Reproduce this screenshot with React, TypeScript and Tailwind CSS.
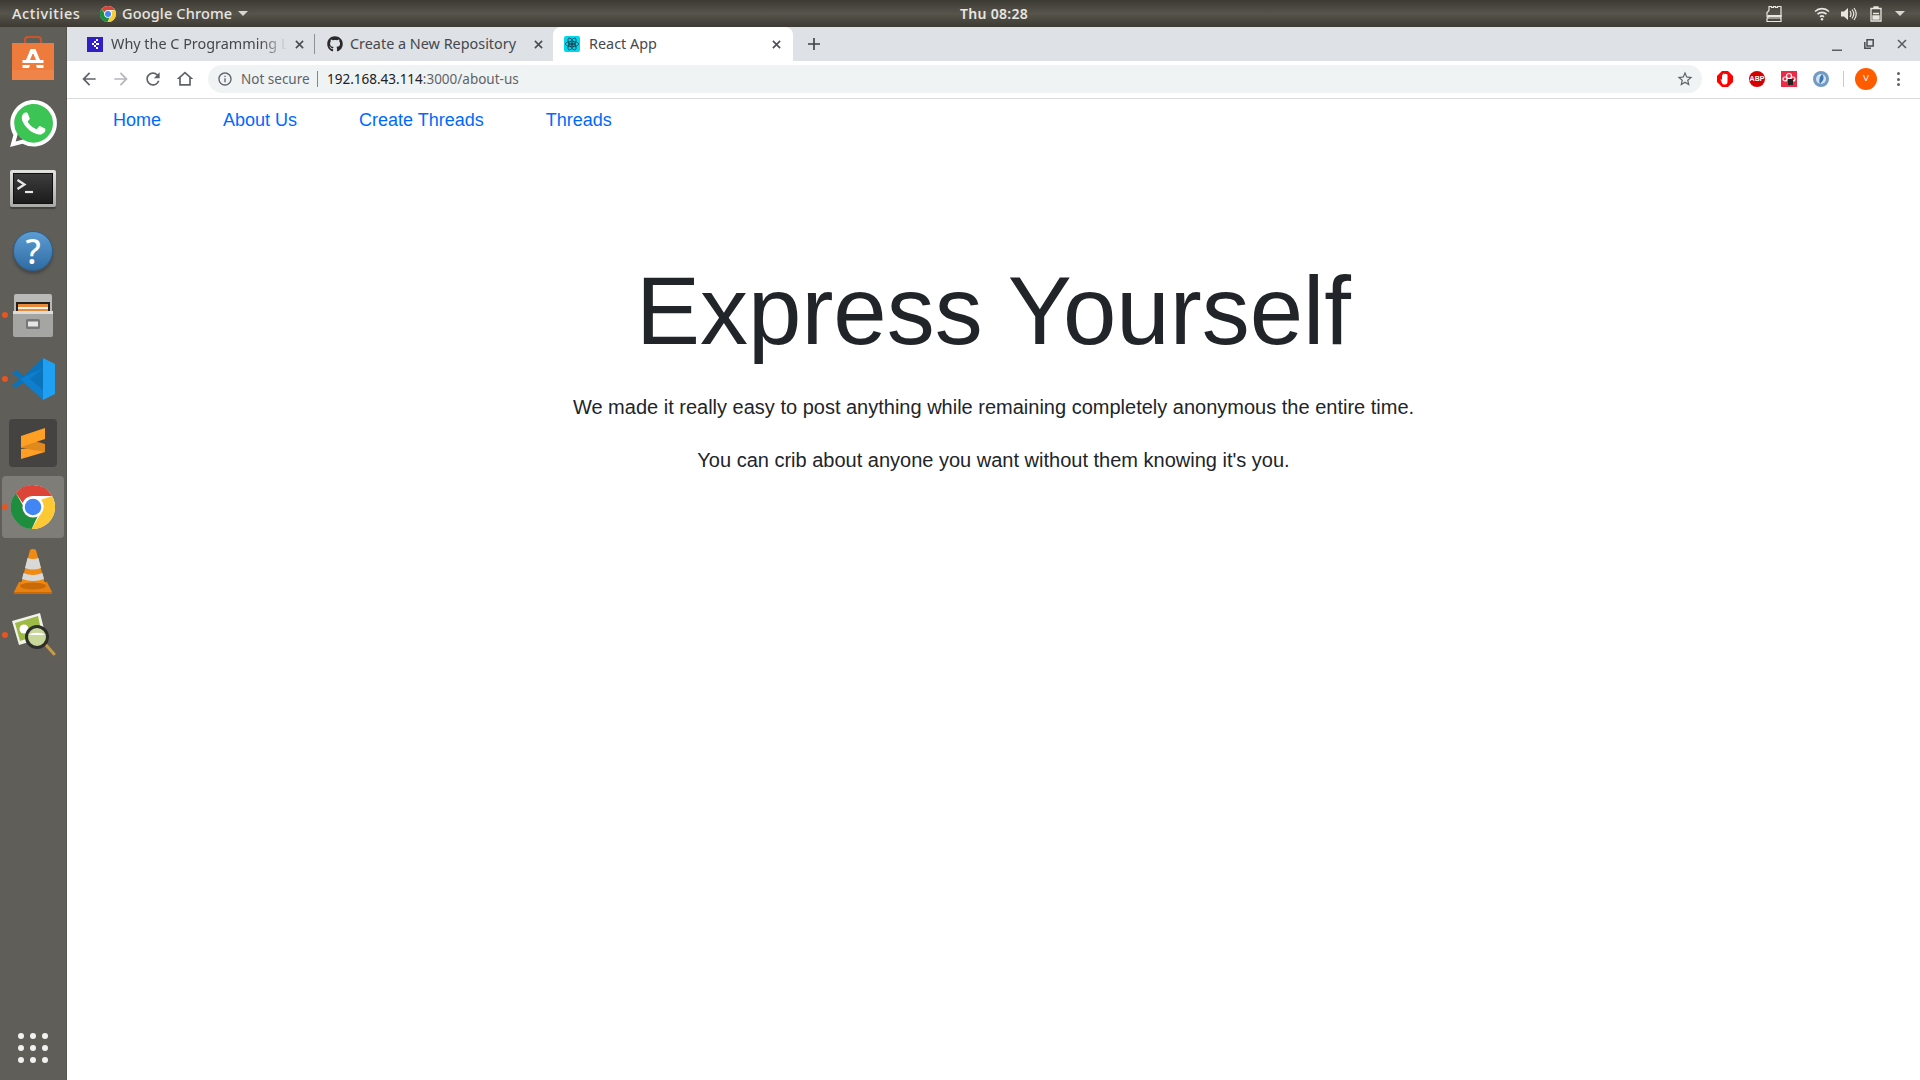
import React from "react";
import { FaGithub } from "react-icons/fa";
import { SiWhatsapp } from "react-icons/si";

const ui = { fontFamily: '"Noto Sans", "Open Sans", sans-serif' };
const arial = { fontFamily: '"Liberation Sans", Arial, sans-serif' };

function ChromeLogo({ size }: { size: number }) {
  return (
    <svg width={size} height={size} viewBox="0 0 48 48">
      <circle cx="24" cy="24" r="24" fill="#fff" />
      <path d="M24 0a24 24 0 0 1 20.8 12H24a12 12 0 0 0-11.2 7.6L5.2 8.6A24 24 0 0 1 24 0z" fill="#db4437" />
      <path d="M44.8 12A24 24 0 0 1 22.5 48l10.9-18.6A12 12 0 0 0 33 16z" fill="#fcc934" />
      <path d="M22.5 48A24 24 0 0 1 5.2 8.6l10.6 18.5A10 10 0 0 0 29.6 33z" fill="#1e8e3e" />
      <circle cx="24" cy="24" r="11.5" fill="#fff" />
      <circle cx="24" cy="24" r="9" fill="#4285f4" />
    </svg>
  );
}

function Material({ d, size = 20, color = "#5f6368", className = "" }: { d: string; size?: number; color?: string; className?: string }) {
  return (
    <svg width={size} height={size} viewBox="0 0 24 24" fill={color} fillRule="evenodd" className={className}>
      <path d={d} />
    </svg>
  );
}

function CloseX({ color = "#4a4d51", size = 9, sw = 1.6 }: { color?: string; size?: number; sw?: number }) {
  return (
    <svg width={size} height={size} viewBox="0 0 10 10" stroke={color} strokeWidth={sw * (10 / size)} fill="none">
      <path d="M1 1l8 8M9 1l-8 8" />
    </svg>
  );
}

function Slot({ dot, active, children }: { dot?: boolean; active?: boolean; children: React.ReactNode }) {
  return (
    <div className="relative h-[64px] w-[66px] flex items-center justify-center shrink-0">
      {active && <div className="absolute left-[2px] top-[1px] h-[62px] w-[62px] rounded-[4px] bg-[#7f7d78]" />}
      {dot && <div className="absolute left-[2px] top-[29px] h-[6px] w-[6px] rounded-full bg-[#e95420]" />}
      <div className="relative flex items-center justify-center">{children}</div>
    </div>
  );
}

function Dock() {
  return (
    <aside className="w-[67px] shrink-0 bg-[#5f5e59] border-r border-[#55544f] flex flex-col">
      <Slot>
        <svg width="44" height="46" viewBox="0 0 44 46">
          <path d="M14 10V4q0-3 3-3h10q3 0 3 3v6" fill="none" stroke="#c9562a" strokeWidth="2.2" />
          <path d="M1 7h42v37H1z" fill="#ee7a3c" />
          <path d="M1 34h42v10H1z" fill="#f08348" />
          <path d="M19.500 13h5l4.500 11h3.500v3H29v2h3.500v3H26l-1-3h-6l-1 3h-6.500v-3H15v-2h-3.500v-3H15z" fill="#fff" />
          <path d="M19 24l2.500-6h1l2.500 6z" fill="#ee7a3c" />
          <path d="M15 27h14v2H15z" fill="#ee7a3c" />
        </svg>
      </Slot>
      <Slot>
        <div className="relative w-[47px] h-[47px]">
          <div className="absolute left-[4px] top-[3px] h-[40px] w-[40px] rounded-full bg-[#3cc455]" />
          <SiWhatsapp className="absolute inset-0 text-white" size={47} />
        </div>
      </Slot>
      <Slot>
        <div className="h-[37px] w-[46px] bg-gradient-to-b from-[#e2e2e0] to-[#a9a9a7] rounded-[2px] p-[3px] mt-[2px] shadow-[0_2px_1px_rgba(0,0,0,0.3)]">
          <div className="h-full w-full bg-gradient-to-b from-[#3d3d3d] to-[#1c1c1c] border border-[#111] relative">
            <svg width="38" height="29" viewBox="0 0 38 29" fill="none" stroke="#e8e8e8" strokeWidth="2.200">
              <path d="M3.500 6l7 4.500-7 4.500" />
              <path d="M11 18h8" />
            </svg>
          </div>
        </div>
      </Slot>
      <Slot>
        <div className="h-[40px] w-[40px] rounded-full bg-gradient-to-b from-[#5d9dd3] to-[#2f6ca3] border border-[#2a5f90] flex items-center justify-center shadow-[0_3px_3px_rgba(0,0,0,0.25)]">
          <span className="text-white text-[34px] font-medium leading-none" style={ui}>?</span>
        </div>
      </Slot>
      <Slot dot>
        <svg width="42" height="44" viewBox="0 0 42 44">
          <path d="M2 3q0-2 2-2h34q2 0 2 2v36H2z" fill="#b9b9b7" />
          <path d="M4 9h34v13H4z" fill="#22201e" />
          <path d="M6 11h30v11H6z" fill="#e68a3a" />
          <path d="M6 14h30v2H6z" fill="#f6f0e6" />
          <path d="M1 18h40v24q0 2-2 2H3q-2 0-2-2z" fill="#a5a5a3" />
          <path d="M1 18h40v3H1z" fill="#dcdcda" />
          <rect x="14" y="26" width="14" height="10" rx="1.500" fill="#77777a" />
          <rect x="16" y="28.500" width="10" height="5" fill="#e6e6e4" />
        </svg>
      </Slot>
      <Slot dot>
        <svg width="43" height="44" viewBox="0 0 43 44">
          <path d="M31 1L12 19 4 13 0 16l8 6-8 6 4 3 8-6 19 18 2-6V7z" fill="#0b73ba" />
          <path d="M31 11L18 22l13 11v10L8 22z" fill="#0e7fce" />
          <path d="M31 1l12 6v30l-12 6z" fill="#20a0f3" />
        </svg>
      </Slot>
      <Slot>
        <div className="h-[48px] w-[48px] rounded-[4px] bg-[#444341] flex items-center justify-center">
          <svg width="24" height="31" viewBox="0 0 24 31">
            <path d="M0 21L24 21v3L0 31z" fill="#ff9f24" />
            <path d="M0 9l24 7v8L0 20z" fill="#e08a1e" />
            <path d="M24 0v11L0 19V8z" fill="#ff9f24" />
          </svg>
        </div>
      </Slot>
      <Slot dot active>
        <ChromeLogo size={44} />
      </Slot>
      <Slot>
        <svg width="40" height="45" viewBox="0 0 40 45">
          <path d="M6 33L1 43q0 2 3 2h32q3 0 3-2l-5-10z" fill="#e8810f" />
          <path d="M1 43h38v2H1z" fill="#c96a08" />
          <path d="M17 1q3-2 6 0l9 34q-12 6-24 0z" fill="#f08a12" />
          <path d="M14.500 9q5.500 2 11 0l2.500 10q-8 3-16 0z" fill="#d8d8d8" />
          <path d="M10.500 24q9.500 4 19 0l1.500 6q-11 4-22 0z" fill="#d8d8d8" />
          <ellipse cx="20" cy="37" rx="13" ry="3.500" fill="#c96a08" />
        </svg>
      </Slot>
      <Slot dot>
        <svg width="45" height="46" viewBox="0 0 45 46">
          <path d="M1 9L29 1l6 24-27 8z" fill="#f2f2ea" />
          <path d="M4 11l23-7 4 18-22 7z" fill="#9cba45" />
          <circle cx="13" cy="17" r="4.500" fill="#fff" />
          <path d="M35 33l8 9" stroke="#c79a45" strokeWidth="3" strokeLinecap="round" />
          <circle cx="26" cy="25" r="10.500" fill="#c7d89a" stroke="#2e2e2c" strokeWidth="3" />
          <path d="M18 23a9 4 0 0 1 16 0z" fill="#fff" />
        </svg>
      </Slot>
      <div className="mt-auto pb-[17px] pl-[18px]">
        <div className="grid grid-cols-3 gap-[6px] w-[30px]">
          {Array.from({ length: 9 }).map((_, i) => (
            <div key={i} className="h-[6px] w-[6px] rounded-full bg-[#f2f2f0]" />
          ))}
        </div>
      </div>
    </aside>
  );
}

function TopBar() {
  return (
    <header
      className="h-[27px] shrink-0 flex items-center relative bg-gradient-to-b from-[#3c3a34] via-[#57544c] to-[#3d3a33] text-[#e8e6e0] text-[14.5px] font-medium"
      style={ui}
    >
      <span className="ml-[12px] w-[88px] whitespace-nowrap tracking-[0.6px]">Activities</span>
      <ChromeLogo size={16} />
      <span className="ml-[6px] whitespace-nowrap tracking-[0.15px]">Google Chrome</span>
      <svg width="10" height="5" viewBox="0 0 10 5" className="ml-[6px]"><path d="M0 0h10L5 5z" fill="#d8d6d0" /></svg>
      <span className="absolute left-[960px] top-[3px] font-semibold text-[14px] tracking-[0.3px]">Thu 08:28</span>
      <div className="ml-auto flex items-center pr-[15px]">
        <svg width="18" height="18" viewBox="0 0 18 18" fill="none" stroke="#e8e6e0" strokeWidth="1.2" className="mr-[31px]">
          <path d="M4 1.500h2.500v1h2v-1h2v1h2v-1H16v15H2v-3l1-1-1-1v-4l2-2z" />
          <path d="M3 10.500h13v1H3zM3 13h13" />
        </svg>
        <svg width="16" height="14" viewBox="0 0 16 14" fill="none" stroke="#e8e6e0" strokeWidth="1.6" className="mr-[11px]">
          <path d="M1 4.500a10 10 0 0 1 14 0M3.500 7.200a6.500 6.500 0 0 1 9 0M6 9.800a3 3 0 0 1 4 0" />
          <circle cx="8" cy="12.200" r="1.200" fill="#e8e6e0" stroke="none" />
        </svg>
        <svg width="16" height="14" viewBox="0 0 16 14" fill="#e8e6e0" className="mr-[13px]">
          <path d="M0 4.500h3L7 1v12L3 9.500H0z" />
          <path d="M9 4q2 3 0 6M11 2.500q3.500 4.500 0 9M13 1q4.500 6 0 12" fill="none" stroke="#e8e6e0" strokeWidth="1.200" />
        </svg>
        <svg width="12" height="16" viewBox="0 0 12 16" fill="none" stroke="#e8e6e0" strokeWidth="1.300" className="mr-[13px]">
          <path d="M1 2.500h10V15H1zM4 2.500V1h4v1.500" />
          <path d="M3 7.500h6M3 10h6v3H3z" fill="#e8e6e0" />
        </svg>
        <svg width="10" height="5" viewBox="0 0 10 5"><path d="M0 0h10L5 5z" fill="#d8d6d0" /></svg>
      </div>
    </header>
  );
}

function TabStrip() {
  return (
    <div className="h-[34px] shrink-0 bg-[#dee1e6] flex items-stretch relative text-[14.4px] text-[#45484d]" style={ui}>
      <div className="w-[248px] flex items-center pl-[20px] relative">
        <div className="h-[15px] w-[16px] bg-[#2f1fc4] flex items-center justify-center shrink-0">
          <svg width="9" height="11" viewBox="0 0 9 11" fill="#fff"><path d="M5 0h2v2H5zM3 2h2v2H3zM1 4h2v2H1zM3 6h2v2H3zM5 8h2v2H5zM5 4h3v2H5z" /></svg>
        </div>
        <span className="ml-[8px] w-[176px] overflow-hidden whitespace-nowrap [mask-image:linear-gradient(to_right,black_85%,transparent)]">Why the C Programming L</span>
        <span className="ml-[8px] flex"><CloseX /></span>
        <div className="absolute right-0 top-[7px] h-[20px] w-px bg-[#8e9196]" />
      </div>
      <div className="w-[238px] flex items-center pl-[12px]">
        <FaGithub size={16} color="#2a2a2a" className="shrink-0" />
        <span className="ml-[7px] w-[184px] whitespace-nowrap">Create a New Repository</span>
        <span className="flex"><CloseX /></span>
      </div>
      <div className="w-[240px] h-[34px] bg-white rounded-t-[8px] flex items-center pl-[11px] relative">
        <div className="h-[16px] w-[16px] rounded-[2px] bg-[#00d8f0] flex items-center justify-center shrink-0">
          <svg width="16" height="16" viewBox="0 0 24 24" fill="none" stroke="#173a4a" strokeWidth="1.200">
            <ellipse cx="12" cy="12" rx="10" ry="4" />
            <ellipse cx="12" cy="12" rx="10" ry="4" transform="rotate(60 12 12)" />
            <ellipse cx="12" cy="12" rx="10" ry="4" transform="rotate(120 12 12)" />
            <circle cx="12" cy="12" r="2" fill="#173a4a" />
          </svg>
        </div>
        <span className="ml-[9px] w-[183px] whitespace-nowrap">React App</span>
        <CloseX />
      </div>
      <div className="ml-[15px] flex items-center">
        <svg width="12" height="12" viewBox="0 0 12 12" stroke="#3c4043" strokeWidth="1.600"><path d="M6 0v12M0 6h12" /></svg>
      </div>
      <div className="ml-auto flex items-center pr-[13px] gap-[22px]">
        <svg width="10" height="10" viewBox="0 0 10 10" className="mt-[3px]"><path d="M0 8.500h10V10H0z" fill="#5a5d62" /></svg>
        <svg width="10" height="10" viewBox="0 0 10 10" fill="none" stroke="#4a4d51" strokeWidth="1.500"><path d="M3 .8h6.200V7H3z" /><path d="M.8 3v6.200H7" /></svg>
        <span className="ml-[1px] flex"><CloseX size={10} color="#5a5d62" /></span>
      </div>
    </div>
  );
}

function Toolbar() {
  return (
    <div className="h-[38px] shrink-0 bg-white border-b border-[#dadce0] flex items-center relative pb-[1px]">
      <div className="flex items-center gap-[12px] pl-[12px] w-[141px]">
        <Material size={20} d="M20 11H7.830l5.590-5.590L12 4l-8 8 8 8 1.410-1.410L7.830 13H20v-2z" />
        <Material size={20} color="#b4b7ba" d="M12 4l-1.410 1.410L16.170 11H4v2h12.170l-5.580 5.590L12 20l8-8z" />
        <Material size={20} d="M17.650 6.350A7.958 7.958 0 0 0 12 4c-4.420 0-7.990 3.580-7.990 8s3.570 8 7.990 8c3.730 0 6.840-2.550 7.730-6h-2.080A5.990 5.990 0 0 1 12 18c-3.310 0-6-2.690-6-6s2.690-6 6-6c1.660 0 3.140.69 4.220 1.780L13 11h7V4l-2.350 2.350z" />
        <Material size={20} d="M12 3L2 12h3v8h14v-8h3zM12 5.700l5 4.500V18H7v-7.800z" />
      </div>
      <div className="h-[28px] w-[1494px] rounded-full bg-[#f0f3f4] flex items-center pl-[9px] text-[13.5px]" style={ui}>
        <Material size={16} d="M11 7h2v2h-2zm0 4h2v6h-2zm1-9C6.480 2 2 6.480 2 12s4.480 10 10 10 10-4.480 10-10S17.520 2 12 2zm0 18c-4.410 0-8-3.590-8-8s3.590-8 8-8 8 3.590 8 8-3.590 8-8 8z" />
        <span className="ml-[8px] text-[#5f6368] w-[76px] whitespace-nowrap">Not secure</span>
        <div className="h-[16px] w-px bg-[#80868b] mr-[9px]" />
        <span className="text-[#202124] whitespace-nowrap">192.168.43.114<span className="text-[#5f6368]">:3000/about-us</span></span>
        <span className="ml-auto mr-[8px] flex">
          <Material size={18} color="#5f6368" d="M22 9.240l-7.190-.62L12 2 9.190 8.630 2 9.240l5.460 4.730L5.820 21 12 17.270 18.180 21l-1.630-7.030L22 9.240zM12 15.400l-3.760 2.270 1-4.280-3.320-2.880 4.380-.38L12 6.100l1.710 4.040 4.380.38-3.320 2.880 1 4.280L12 15.400z" />
        </span>
      </div>
      <div className="flex items-center ml-[15px] gap-[16px]">
        <svg width="16" height="16" viewBox="0 0 16 16">
          <path d="M5 0h6l5 5v6l-5 5H5l-5-5V5z" fill="#f00" />
          <path d="M5 12L3.500 8.500q.7-.7 1.500.3V4q1-.8 1 0V3q1-.8 1.500 0 .8-.6 1.500.3.900-.5 1.500.4V11q0 2-2 2.500H7q-1.200 0-2-1.500z" fill="#fff" />
        </svg>
        <div className="h-[16px] w-[16px] rounded-full bg-[#d50000] flex items-center justify-center text-white text-[7px] font-bold" style={arial}>ABP</div>
        <svg width="16" height="16" viewBox="0 0 16 16">
          <rect width="16" height="16" fill="#ee2a44" />
          <circle cx="8" cy="5" r="2.500" fill="none" stroke="#fff" strokeWidth="1.200" />
          <circle cx="4" cy="8" r="2" fill="none" stroke="#fff" strokeWidth="1.200" />
          <circle cx="12" cy="8" r="2" fill="none" stroke="#fff" strokeWidth="1.200" />
          <path d="M7 8h5v6H7z" fill="#222" />
        </svg>
        <svg width="16" height="16" viewBox="0 0 16 16">
          <circle cx="8" cy="8" r="8" fill="#6f9bc4" />
          <circle cx="8" cy="8" r="5" fill="#d5e2ee" />
          <path d="M9 3q4 4-2 10-2-5 2-10z" fill="#3a78b5" />
        </svg>
        <div className="ml-[-2px] h-[16px] w-px bg-[#c8cacd]" />
        <div className="ml-[-5px] h-[22px] w-[22px] rounded-full bg-[#ff5c00] flex items-center justify-center text-white text-[9px]" style={arial}>V</div>
        <div className="ml-[4px] flex flex-col gap-[2.500px]">
          <div className="h-[3px] w-[3px] rounded-full bg-[#5f6368]" />
          <div className="h-[3px] w-[3px] rounded-full bg-[#5f6368]" />
          <div className="h-[3px] w-[3px] rounded-full bg-[#5f6368]" />
        </div>
      </div>
    </div>
  );
}

export default function App() {
  return (
    <div className="h-screen w-full overflow-hidden flex flex-col bg-white">
      <TopBar />
      <div className="flex-1 flex min-h-0">
        <Dock />
        <div className="flex-1 min-w-0 flex flex-col">
          <TabStrip />
          <Toolbar />
          <main className="flex-1 bg-white" style={arial}>
            <nav className="flex items-center gap-[62px] pl-[46px] h-[42px] text-[18px] text-[#0069ff]">
              <a>Home</a>
              <a>About Us</a>
              <a>Create Threads</a>
              <a>Threads</a>
            </nav>
            <section className="text-center text-[#212529] pt-[112px]">
              <h1 className="text-[96px] leading-[1.2] font-normal mb-[24px]">Express Yourself</h1>
              <p className="text-[20px] leading-[30px] mb-[23px]">We made it really easy to post anything while remaining completely anonymous the entire time.</p>
              <p className="text-[20px] leading-[30px]">You can crib about anyone you want without them knowing it's you.</p>
            </section>
          </main>
        </div>
      </div>
    </div>
  );
}
